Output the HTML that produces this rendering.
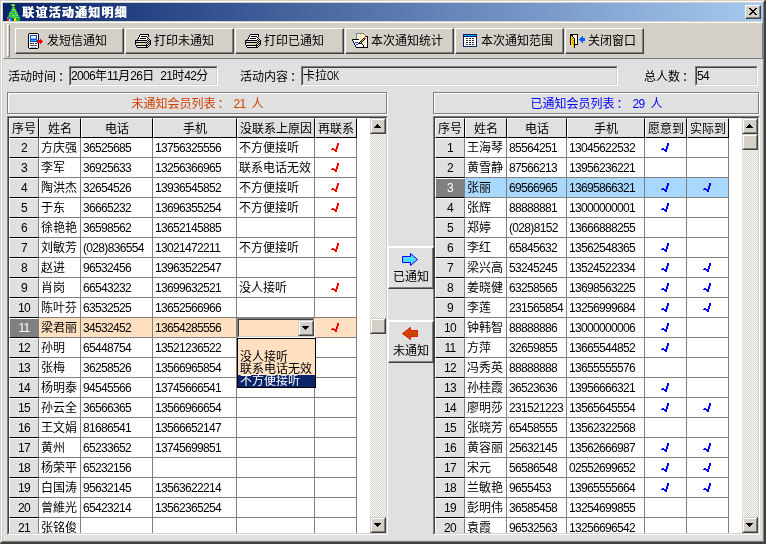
<!DOCTYPE html>
<html lang="zh-CN">
<head>
<meta charset="utf-8">
<title>联谊活动通知明细</title>
<style>
html,body{margin:0;padding:0}
body{width:766px;height:544px;overflow:hidden;position:relative;background:#e0e0e0;color:#000;
 font-family:"Liberation Sans","Noto Sans CJK SC",sans-serif;font-size:12px;line-height:12px}
div,span,svg{box-sizing:border-box}
#root{position:absolute;left:0;top:0;width:766px;height:544px;will-change:transform}
.a{position:absolute}
svg{display:block;shape-rendering:crispEdges}
.n{letter-spacing:-0.67px}
/* window frame */
#frame{left:0;top:0;width:766px;height:544px;
 border-style:solid;border-color:#d4d0c8 #404040 #404040 #d4d0c8;border-width:1px 2px 2px 1px}
#frame2{left:1px;top:1px;width:763px;height:541px;
 border-style:solid;border-color:#fff #808080 #808080 #fff;border-width:1px}
#frame3{left:2px;top:2px;width:761px;height:539px;border:1px solid #d4d0c8}
#title{left:3px;top:3px;width:760px;height:18px;background:linear-gradient(to right,#0a246a 0%,#a6caf0 100%)}
#title .t{left:19px;top:4px;color:#fff;font-weight:bold;letter-spacing:1.2px;white-space:nowrap;text-shadow:0.6px 0 0 #fff}
#close{left:742px;top:2px;width:16px;height:14px;background:#d4d0c8;
 border-style:solid;border-width:1px;border-color:#fff #404040 #404040 #fff}
#close:before{content:"";position:absolute;left:0;top:0;width:13px;height:11px;border-style:solid;border-width:0 1px 1px 0;border-color:#808080}
#tbgap{left:3px;top:21px;width:760px;height:1px;background:#d4d0c8}
#toolbar{left:3px;top:22px;width:760px;height:37px;background:#d4d0c8;
 border-style:solid;border-width:1px;border-color:#fff #808080 #808080 #fff}
#grip{left:7px;top:24px;width:3px;height:33px;background:#d4d0c8;border-style:solid;border-width:1px;border-color:#fff #808080 #808080 #fff}
.tb{top:28px;height:26px;background:#d4d0c8;border-style:solid;border-width:1px;border-color:#fff #404040 #404040 #fff}
.tb:before{content:"";position:absolute;left:0;top:0;right:0;bottom:0;border-style:solid;border-width:0 1px 1px 0;border-color:#808080}
.tb .x{position:absolute;top:6px;white-space:nowrap}
.tb svg{position:absolute}
/* labels & edits */
.lb{white-space:nowrap}
.ed{height:20px;top:66px;border-style:solid;border-width:1px;border-color:#808080 #fff #fff #808080;background:#e0e0e0}
.ed:before{content:"";position:absolute;left:0;top:0;right:0;bottom:0;border-style:solid;border-width:1px;border-color:#404040 #d4d0c8 #d4d0c8 #404040}
.ed span.v{position:absolute;left:1px;top:3px;white-space:nowrap}
/* groove panels */
.pn{top:92px;height:23px}
.pn:before{content:"";position:absolute;left:1px;top:1px;right:0;bottom:0;border:1px solid #fff}
.pn:after{content:"";position:absolute;left:0;top:0;right:1px;bottom:1px;border:1px solid #808080}
.pn .x{position:absolute;left:0;right:0;top:6px;text-align:center;white-space:nowrap}
.sp{display:inline-block;width:6px}
.co{position:relative;left:2px}
/* grids */
.grid{top:116px;height:419px;background:#fff;border-style:solid;border-width:1px;border-color:#808080 #fff #fff #808080}
.grid:before{content:"";position:absolute;left:0;top:0;right:0;bottom:0;border-style:solid;border-width:1px;border-color:#404040 #d4d0c8 #d4d0c8 #404040;z-index:5;pointer-events:none}
.gi{position:absolute;left:1px;top:1px;right:1px;bottom:1px;overflow:hidden}
.hc{position:absolute;top:0;height:20px;background:#e0e0e0;border-style:solid;border-width:1px;border-color:#fff #000 #000 #fff;
 text-align:center;padding-top:4px;white-space:nowrap;overflow:hidden}
.fc{position:absolute;left:0;height:20px;background:#e0e0e0;border-style:solid;border-width:1px;border-color:#fff #808080 #000 #fff;
 text-align:center;padding-top:3px;white-space:nowrap;overflow:hidden}
.fc.sel{background:#808080;color:#fff;border-color:#fff #808080 #000 #fff}
.dc{position:absolute;height:20px;border-style:solid;border-width:0 1px 1px 0;border-color:#808080;padding:4px 0 0 2px;white-space:nowrap;overflow:hidden}
.dc.c{padding:5px 0 0 16px}
.sb{position:absolute;top:0;width:16px;height:415px;background:repeating-conic-gradient(#fff 0% 25%,#d4d0c8 0% 50%) 0 0/2px 2px}
.btn{position:absolute;left:0;width:16px;height:16px;background:#d4d0c8;border-style:solid;border-width:1px;border-color:#d4d0c8 #404040 #404040 #d4d0c8}
.btn:before{content:"";position:absolute;left:0;top:0;right:0;bottom:0;border-style:solid;border-width:1px;border-color:#fff #808080 #808080 #fff}
.btn svg{position:absolute;left:3px;top:5px}
/* middle buttons */
.mb{left:388px;width:46px;height:43px;background:#e0e0e0;border-style:solid;border-width:2px 1px 1px 1px;border-color:#fff #404040 #404040 #fff;z-index:8}
.mb:before{content:"";position:absolute;left:0;top:0;right:0;bottom:0;border-style:solid;border-width:0 1px 1px 0;border-color:#808080}
.mb .x{position:absolute;left:4px;top:23px;white-space:nowrap}
.mb svg{position:absolute;left:13px;top:5px}
/* combo */
#combo{left:228px;top:200px;width:78px;height:20px;background:#ffe0c0;border-style:solid;border-width:1px;border-color:#808080 #fff #fff #808080;z-index:6}
#combo:before{content:"";position:absolute;left:0;top:0;right:0;bottom:0;border-style:solid;border-width:1px;border-color:#404040 #d4d0c8 #d4d0c8 #404040}
#combo .btn{left:60px;top:1px;width:16px;height:16px}
#drop{left:228px;top:220px;width:79px;height:50px;background:#ffe0c0;border:1px solid #000;z-index:7}
#drop div{height:12px;padding-left:2px;white-space:nowrap}
#drop div.s{background:#0a246a;color:#fff}
</style>
</head>
<body>
<div id="root">
<div class="a" id="frame"></div><div class="a" id="frame2"></div><div class="a" id="frame3"></div>
<div class="a" id="title">
 <svg class="a" style="left:3px;top:1px" width="15" height="17" viewBox="0 0 15 17">
  <path fill="#30d040" d="M5 0h4v2h-4zM7 2h1v2h-1zM6 3h3v2h-3zM5 5h5v2h-5zM4 7h7v2h-7zM3 9h9v2h-9zM2 11h11v2h-11zM1 13h13v1h-13z"/>
  <path fill="#ffd020" d="M6 1h3v1h-3zM7 5h1v1h-1zM8 6h1v1h-1zM9 8h1v1h-1zM3 9h1v1h-1zM7 11h1v1h-1zM10 11h1v1h-1zM8 14h2v3h-2z"/>
  <path fill="#1070ff" d="M5 6h1v1h-1zM7 8h2v1h-2zM5 10h1v1h-1zM11 12h1v1h-1zM3 13h3v4h-3z"/>
  <path fill="#40c0ff" d="M6 10h1v1h-1zM11 11h1v1h-1z"/>
  <path fill="#d03000" d="M2 11h1v2h-1zM1 14h2v3h-2z"/>
  <path fill="#f0f0f0" d="M3 15h1v2h-1z"/>
  <path fill="#106020" d="M6 14h2v3h-2z"/>
  <path fill="#20b030" d="M10 14h4v3h-4z"/>
 </svg>
 <span class="a t">联谊活动通知明细</span>
 <div class="a" id="close"><svg class="a" style="left:3px;top:2px" width="8" height="7" viewBox="0 0 8 7"><path fill="#000" d="M0 0h2v1h-2zM6 0h2v1h-2zM1 1h2v1h-2zM5 1h2v1h-2zM2 2h4v1h-4zM3 3h2v1h-2zM2 4h4v1h-4zM1 5h2v1h-2zM5 5h2v1h-2zM0 6h2v1h-2zM6 6h2v1h-2z"/></svg></div>
</div>
<div class="a" id="tbgap"></div>
<div class="a" id="toolbar"></div>
<div class="a" id="grip"></div>

<div class="a tb" style="left:15px;width:109px">
 <svg style="left:12px;top:4px" width="16" height="16" viewBox="0 0 16 16">
  <path fill="#000" d="M1 0h9v1h-9zM0 1h1v14h-1zM10 1h1v14h-1zM1 15h9v1h-9z"/>
  <path fill="#fff" d="M1 1h9v14h-9z"/>
  <path fill="#0050f0" d="M2 2h7v7h-7z"/>
  <path fill="#f8f0e8" d="M3 3h5v2h-5z"/>
  <path fill="#a0b8f0" d="M3 5h5v1h-5z"/>
  <path fill="#20c0ff" d="M3 7h5v1h-5z"/>
  <path fill="#0000e0" d="M5 8h1v1h-1z"/>
  <path fill="#303030" d="M2 10h2v1h-2zM5 10h1v1h-1zM7 10h2v1h-2z"/>
  <path fill="#3060d0" d="M4 10h1v1h-1z"/>
  <path fill="#606060" d="M2 12h7v1h-7z"/>
  <path fill="#80a8f0" d="M3 14h2v1h-2zM6 14h2v1h-2z"/>
  <path fill="#f00000" d="M9 7h3v3h-3zM12 6h1v5h-1zM13 7h1v3h-1zM14 8h1v1h-1z"/>
 </svg>
 <span class="x" style="left:31px">发短信通知</span>
</div>
<div class="a tb" style="left:125px;width:109px">
 <svg style="left:9px;top:5px" width="16" height="14" viewBox="0 0 16 14">
  <path fill="#fff" d="M5 1h8v1h-8zM5 2h8v1h-8zM4 3h8v1h-8zM4 4h8v1h-8zM3 5h9v1h-9zM2 12h10v1h-10z"/>
  <path fill="#d8d8d8" d="M1 7h11v1h-11zM1 9h11v1h-11zM1 10h11v1h-11z"/>
  <path fill="#ffc000" d="M7 10h3v1h-3z"/>
  <path fill="#000" d="M5 0h9v1h-9zM4 1h1v1h-1zM13 1h1v1h-1zM4 2h1v1h-1zM6 2h6v1h-6zM13 2h1v1h-1zM3 3h1v1h-1zM12 3h1v1h-1zM3 4h1v1h-1zM5 4h6v1h-6zM2 5h1v1h-1zM0 6h12v1h-12zM0 7h1v1h-1zM0 8h12v1h-12zM0 9h1v1h-1zM0 10h1v1h-1zM1 11h11v1h-11zM1 12h1v1h-1zM2 13h11v1h-11zM13 4h1v1h-1zM12 5h1v1h-1zM11 6h1v1h-1zM13 6h1v1h-1zM12 7h1v1h-1zM14 7h1v1h-1zM11 8h1v1h-1zM13 8h1v1h-1zM12 9h1v1h-1zM14 9h1v1h-1zM11 10h1v1h-1zM13 10h1v1h-1zM12 11h1v1h-1zM14 11h1v1h-1zM11 12h1v1h-1zM13 12h1v1h-1zM15 6h1v5h-1zM14 5h1v1h-1zM14 11h1v1h-1zM13 12h1v1h-1z"/>
 </svg>
 <span class="x" style="left:28px">打印未通知</span>
</div>
<div class="a tb" style="left:235px;width:109px">
 <svg style="left:9px;top:5px" width="16" height="14" viewBox="0 0 16 14">
  <path fill="#fff" d="M5 1h8v1h-8zM5 2h8v1h-8zM4 3h8v1h-8zM4 4h8v1h-8zM3 5h9v1h-9zM2 12h10v1h-10z"/>
  <path fill="#d8d8d8" d="M1 7h11v1h-11zM1 9h11v1h-11zM1 10h11v1h-11z"/>
  <path fill="#ffc000" d="M7 10h3v1h-3z"/>
  <path fill="#000" d="M5 0h9v1h-9zM4 1h1v1h-1zM13 1h1v1h-1zM4 2h1v1h-1zM6 2h6v1h-6zM13 2h1v1h-1zM3 3h1v1h-1zM12 3h1v1h-1zM3 4h1v1h-1zM5 4h6v1h-6zM2 5h1v1h-1zM0 6h12v1h-12zM0 7h1v1h-1zM0 8h12v1h-12zM0 9h1v1h-1zM0 10h1v1h-1zM1 11h11v1h-11zM1 12h1v1h-1zM2 13h11v1h-11zM13 4h1v1h-1zM12 5h1v1h-1zM11 6h1v1h-1zM13 6h1v1h-1zM12 7h1v1h-1zM14 7h1v1h-1zM11 8h1v1h-1zM13 8h1v1h-1zM12 9h1v1h-1zM14 9h1v1h-1zM11 10h1v1h-1zM13 10h1v1h-1zM12 11h1v1h-1zM14 11h1v1h-1zM11 12h1v1h-1zM13 12h1v1h-1zM15 6h1v5h-1zM14 5h1v1h-1zM14 11h1v1h-1zM13 12h1v1h-1z"/>
 </svg>
 <span class="x" style="left:28px">打印已通知</span>
</div>
<div class="a tb" style="left:345px;width:109px">
 <svg style="left:6px;top:4px" width="16" height="15" viewBox="0 0 16 15">
  <path fill="#fff" d="M5 1h7l3 3v10h-10z"/>
  <path fill="#808080" d="M4 0h8v1h-8zM4 1h1v6h-1zM12 1h1v1h-1zM13 2h1v1h-1z"/>
  <path fill="#000" d="M14 3h2v1h-2zM15 4h1v11h-1zM12 14h4v1h-4z"/>
  <path fill="#ffc820" d="M6 2h1v1h-1zM8 1h1v1h-1zM10 2h1v1h-1zM6 4h1v1h-1zM8 3h1v1h-1zM8 5h1v1h-1zM12 9h1v1h-1zM12 11h1v1h-1zM10 10h1v1h-1z"/>
  <path fill="#fff" d="M1 7h7l4 7h-8z"/>
  <path fill="#000" d="M0 6h7v1h-7zM0 7h1v1h-1zM1 8h1v2h-1zM2 10h1v2h-1zM3 12h1v2h-1zM4 14h8v1h-8zM9 10h1v1h-1zM10 11h1v1h-1zM11 12h1v2h-1z"/>
  <path fill="#0020ff" d="M3 9h3v1h-3zM4 11h2v1h-2z"/>
  <path fill="#000" d="M6 10h2v1h-2zM7 9h1v1h-1zM8 8h1v1h-1zM9 7h1v1h-1zM10 6h1v1h-1zM11 5h1v1h-1zM8 10h1v1h-1zM9 9h1v1h-1zM10 8h1v1h-1zM11 7h1v1h-1zM12 6h1v1h-1z"/>
  <path fill="#ffd000" d="M8 9h1v1h-1zM9 8h1v1h-1zM10 7h1v1h-1zM11 6h1v1h-1z"/>
  <path fill="#f02020" d="M12 4h1v2h-1zM13 5h1v1h-1zM13 3h1v1h-1z"/>
 </svg>
 <span class="x" style="left:25px">本次通知统计</span>
</div>
<div class="a tb" style="left:455px;width:109px">
 <svg style="left:7px;top:5px" width="14" height="13" viewBox="0 0 14 13">
  <path fill="#0a246a" d="M0 0h14v13h-14z"/>
  <path fill="#00a0ff" d="M1 1h12v1h-12z"/>
  <path fill="#fff" d="M1 3h12v9h-12z"/>
  <path fill="#303030" d="M3 4h2v1h-2zM6 4h2v1h-2zM9 4h2v1h-2zM3 6h2v1h-2zM6 6h2v1h-2zM9 6h2v1h-2zM3 8h2v1h-2zM6 8h2v1h-2zM9 8h2v1h-2zM3 10h2v1h-2zM6 10h2v1h-2zM9 10h2v1h-2z"/>
 </svg>
 <span class="x" style="left:25px">本次通知范围</span>
</div>
<div class="a tb" style="left:565px;width:79px">
 <svg style="left:4px;top:5px" width="16" height="14" viewBox="0 0 16 14">
  <path fill="#000" d="M0 0h8v11h-8z"/>
  <path fill="#fff" d="M3 1h4v9h-4z"/>
  <path fill="#000" d="M1 1l4 3v10l-4 -3z"/>
  <path fill="#ffd800" d="M1 2l3 2.500v8.500l-3 -2.500z"/>
  <path fill="#f06000" d="M2 4h1v1h-1zM3 6h1v1h-1zM2 8h1v1h-1zM3 10h1v1h-1z"/>
  <path fill="#0060ff" d="M9 5h1v1h-1zM10 4h1v3h-1zM11 3h1v5h-1zM12 2h1v7h-1zM13 4h2v3h-2z"/>
 </svg>
 <span class="x" style="left:22px">关闭窗口</span>
</div>

<span class="a lb" style="left:8px;top:71px">活动时间<span class="co">：</span></span>
<div class="a ed" style="left:69px;width:149px"><span class="v"><span class="n">2006</span>年<span class="n">11</span>月<span class="n">26</span>日<span class="sp"></span><span class="n">21</span>时<span class="n">42</span>分</span></div>
<span class="a lb" style="left:240px;top:71px">活动内容<span class="co">：</span></span>
<div class="a ed" style="left:301px;width:317px"><span class="v">卡拉<span style="display:inline-block;width:12px;transform:scaleX(.7);transform-origin:0 50%;white-space:nowrap">OK</span></span></div>
<span class="a lb" style="left:644px;top:71px">总人数<span class="co">：</span></span>
<div class="a ed" style="left:695px;width:63px"><span class="v"><span class="n">54</span></span></div>

<div class="a pn" style="left:7px;width:381px"><span class="x" style="color:#d04000">未通知会员列表<span class="co">：</span><span class="sp"></span><span class="n">21</span><span class="sp"></span>人</span></div>
<div class="a pn" style="left:433px;width:327px"><span class="x" style="color:#0000ff">已通知会员列表<span class="co">：</span><span class="sp"></span><span class="n">29</span><span class="sp"></span>人</span></div>

<div class="a grid" style="left:7px;width:381px"><div class="gi">
<div class="hc" style="left:0px;width:30px">序号</div>
<div class="hc" style="left:30px;width:42px">姓名</div>
<div class="hc" style="left:72px;width:72px">电话</div>
<div class="hc" style="left:144px;width:84px">手机</div>
<div class="hc" style="left:228px;width:78px">没联系上原因</div>
<div class="hc" style="left:306px;width:42px">再联系</div>
<div class="fc" style="top:20px;width:30px"><span class="n">2</span></div>
<div class="dc" style="top:20px;left:30px;width:42px">方庆强</div>
<div class="dc" style="top:20px;left:72px;width:72px"><span class="n">36525685</span></div>
<div class="dc" style="top:20px;left:144px;width:84px"><span class="n">13756325556</span></div>
<div class="dc" style="top:20px;left:228px;width:78px">不方便接听</div>
<div class="dc c" style="top:20px;left:306px;width:42px"><svg class="ck" width="8" height="9" viewBox="0 0 8 9"><path fill="#f00" d="M6 0h2v3h-2zM5 3h2v3h-2zM4 6h2v3h-2zM1 5h2v1h-2zM0 6h4v1h-4zM3 7h1v1h-1z"/></svg></div>
<div class="fc" style="top:40px;width:30px"><span class="n">3</span></div>
<div class="dc" style="top:40px;left:30px;width:42px">李军</div>
<div class="dc" style="top:40px;left:72px;width:72px"><span class="n">36925633</span></div>
<div class="dc" style="top:40px;left:144px;width:84px"><span class="n">13256366965</span></div>
<div class="dc" style="top:40px;left:228px;width:78px">联系电话无效</div>
<div class="dc c" style="top:40px;left:306px;width:42px"><svg class="ck" width="8" height="9" viewBox="0 0 8 9"><path fill="#f00" d="M6 0h2v3h-2zM5 3h2v3h-2zM4 6h2v3h-2zM1 5h2v1h-2zM0 6h4v1h-4zM3 7h1v1h-1z"/></svg></div>
<div class="fc" style="top:60px;width:30px"><span class="n">4</span></div>
<div class="dc" style="top:60px;left:30px;width:42px">陶洪杰</div>
<div class="dc" style="top:60px;left:72px;width:72px"><span class="n">32654526</span></div>
<div class="dc" style="top:60px;left:144px;width:84px"><span class="n">13936545852</span></div>
<div class="dc" style="top:60px;left:228px;width:78px">不方便接听</div>
<div class="dc c" style="top:60px;left:306px;width:42px"><svg class="ck" width="8" height="9" viewBox="0 0 8 9"><path fill="#f00" d="M6 0h2v3h-2zM5 3h2v3h-2zM4 6h2v3h-2zM1 5h2v1h-2zM0 6h4v1h-4zM3 7h1v1h-1z"/></svg></div>
<div class="fc" style="top:80px;width:30px"><span class="n">5</span></div>
<div class="dc" style="top:80px;left:30px;width:42px">于东</div>
<div class="dc" style="top:80px;left:72px;width:72px"><span class="n">36665232</span></div>
<div class="dc" style="top:80px;left:144px;width:84px"><span class="n">13696355254</span></div>
<div class="dc" style="top:80px;left:228px;width:78px">不方便接听</div>
<div class="dc c" style="top:80px;left:306px;width:42px"><svg class="ck" width="8" height="9" viewBox="0 0 8 9"><path fill="#f00" d="M6 0h2v3h-2zM5 3h2v3h-2zM4 6h2v3h-2zM1 5h2v1h-2zM0 6h4v1h-4zM3 7h1v1h-1z"/></svg></div>
<div class="fc" style="top:100px;width:30px"><span class="n">6</span></div>
<div class="dc" style="top:100px;left:30px;width:42px">徐艳艳</div>
<div class="dc" style="top:100px;left:72px;width:72px"><span class="n">36598562</span></div>
<div class="dc" style="top:100px;left:144px;width:84px"><span class="n">13652145885</span></div>
<div class="dc" style="top:100px;left:228px;width:78px"></div>
<div class="dc c" style="top:100px;left:306px;width:42px"></div>
<div class="fc" style="top:120px;width:30px"><span class="n">7</span></div>
<div class="dc" style="top:120px;left:30px;width:42px">刘敏芳</div>
<div class="dc" style="top:120px;left:72px;width:72px"><span class="n">(028)836554</span></div>
<div class="dc" style="top:120px;left:144px;width:84px"><span class="n">13021472211</span></div>
<div class="dc" style="top:120px;left:228px;width:78px">不方便接听</div>
<div class="dc c" style="top:120px;left:306px;width:42px"><svg class="ck" width="8" height="9" viewBox="0 0 8 9"><path fill="#f00" d="M6 0h2v3h-2zM5 3h2v3h-2zM4 6h2v3h-2zM1 5h2v1h-2zM0 6h4v1h-4zM3 7h1v1h-1z"/></svg></div>
<div class="fc" style="top:140px;width:30px"><span class="n">8</span></div>
<div class="dc" style="top:140px;left:30px;width:42px">赵进</div>
<div class="dc" style="top:140px;left:72px;width:72px"><span class="n">96532456</span></div>
<div class="dc" style="top:140px;left:144px;width:84px"><span class="n">13963522547</span></div>
<div class="dc" style="top:140px;left:228px;width:78px"></div>
<div class="dc c" style="top:140px;left:306px;width:42px"></div>
<div class="fc" style="top:160px;width:30px"><span class="n">9</span></div>
<div class="dc" style="top:160px;left:30px;width:42px">肖岗</div>
<div class="dc" style="top:160px;left:72px;width:72px"><span class="n">66543232</span></div>
<div class="dc" style="top:160px;left:144px;width:84px"><span class="n">13699632521</span></div>
<div class="dc" style="top:160px;left:228px;width:78px">没人接听</div>
<div class="dc c" style="top:160px;left:306px;width:42px"><svg class="ck" width="8" height="9" viewBox="0 0 8 9"><path fill="#f00" d="M6 0h2v3h-2zM5 3h2v3h-2zM4 6h2v3h-2zM1 5h2v1h-2zM0 6h4v1h-4zM3 7h1v1h-1z"/></svg></div>
<div class="fc" style="top:180px;width:30px"><span class="n">10</span></div>
<div class="dc" style="top:180px;left:30px;width:42px">陈叶芬</div>
<div class="dc" style="top:180px;left:72px;width:72px"><span class="n">63532525</span></div>
<div class="dc" style="top:180px;left:144px;width:84px"><span class="n">13652566966</span></div>
<div class="dc" style="top:180px;left:228px;width:78px"></div>
<div class="dc c" style="top:180px;left:306px;width:42px"></div>
<div class="fc sel" style="top:200px;width:30px"><span class="n">11</span></div>
<div class="dc" style="top:200px;left:30px;width:42px;background:#ffe0c0">梁君丽</div>
<div class="dc" style="top:200px;left:72px;width:72px;background:#ffe0c0"><span class="n">34532452</span></div>
<div class="dc" style="top:200px;left:144px;width:84px;background:#ffe0c0"><span class="n">13654285556</span></div>
<div class="dc" style="top:200px;left:228px;width:78px;background:#ffe0c0"></div>
<div class="dc c" style="top:200px;left:306px;width:42px;background:#ffe0c0"><svg class="ck" width="8" height="9" viewBox="0 0 8 9"><path fill="#f00" d="M6 0h2v3h-2zM5 3h2v3h-2zM4 6h2v3h-2zM1 5h2v1h-2zM0 6h4v1h-4zM3 7h1v1h-1z"/></svg></div>
<div class="fc" style="top:220px;width:30px"><span class="n">12</span></div>
<div class="dc" style="top:220px;left:30px;width:42px">孙明</div>
<div class="dc" style="top:220px;left:72px;width:72px"><span class="n">65448754</span></div>
<div class="dc" style="top:220px;left:144px;width:84px"><span class="n">13521236522</span></div>
<div class="dc" style="top:220px;left:228px;width:78px"></div>
<div class="dc c" style="top:220px;left:306px;width:42px"></div>
<div class="fc" style="top:240px;width:30px"><span class="n">13</span></div>
<div class="dc" style="top:240px;left:30px;width:42px">张梅</div>
<div class="dc" style="top:240px;left:72px;width:72px"><span class="n">36258526</span></div>
<div class="dc" style="top:240px;left:144px;width:84px"><span class="n">13566965854</span></div>
<div class="dc" style="top:240px;left:228px;width:78px"></div>
<div class="dc c" style="top:240px;left:306px;width:42px"></div>
<div class="fc" style="top:260px;width:30px"><span class="n">14</span></div>
<div class="dc" style="top:260px;left:30px;width:42px">杨明泰</div>
<div class="dc" style="top:260px;left:72px;width:72px"><span class="n">94545566</span></div>
<div class="dc" style="top:260px;left:144px;width:84px"><span class="n">13745666541</span></div>
<div class="dc" style="top:260px;left:228px;width:78px"></div>
<div class="dc c" style="top:260px;left:306px;width:42px"></div>
<div class="fc" style="top:280px;width:30px"><span class="n">15</span></div>
<div class="dc" style="top:280px;left:30px;width:42px">孙云全</div>
<div class="dc" style="top:280px;left:72px;width:72px"><span class="n">36566365</span></div>
<div class="dc" style="top:280px;left:144px;width:84px"><span class="n">13566966654</span></div>
<div class="dc" style="top:280px;left:228px;width:78px"></div>
<div class="dc c" style="top:280px;left:306px;width:42px"></div>
<div class="fc" style="top:300px;width:30px"><span class="n">16</span></div>
<div class="dc" style="top:300px;left:30px;width:42px">王文娟</div>
<div class="dc" style="top:300px;left:72px;width:72px"><span class="n">81686541</span></div>
<div class="dc" style="top:300px;left:144px;width:84px"><span class="n">13566652147</span></div>
<div class="dc" style="top:300px;left:228px;width:78px"></div>
<div class="dc c" style="top:300px;left:306px;width:42px"></div>
<div class="fc" style="top:320px;width:30px"><span class="n">17</span></div>
<div class="dc" style="top:320px;left:30px;width:42px">黄州</div>
<div class="dc" style="top:320px;left:72px;width:72px"><span class="n">65233652</span></div>
<div class="dc" style="top:320px;left:144px;width:84px"><span class="n">13745699851</span></div>
<div class="dc" style="top:320px;left:228px;width:78px"></div>
<div class="dc c" style="top:320px;left:306px;width:42px"></div>
<div class="fc" style="top:340px;width:30px"><span class="n">18</span></div>
<div class="dc" style="top:340px;left:30px;width:42px">杨荣平</div>
<div class="dc" style="top:340px;left:72px;width:72px"><span class="n">65232156</span></div>
<div class="dc" style="top:340px;left:144px;width:84px"><span class="n"></span></div>
<div class="dc" style="top:340px;left:228px;width:78px"></div>
<div class="dc c" style="top:340px;left:306px;width:42px"></div>
<div class="fc" style="top:360px;width:30px"><span class="n">19</span></div>
<div class="dc" style="top:360px;left:30px;width:42px">白国涛</div>
<div class="dc" style="top:360px;left:72px;width:72px"><span class="n">95632145</span></div>
<div class="dc" style="top:360px;left:144px;width:84px"><span class="n">13563622214</span></div>
<div class="dc" style="top:360px;left:228px;width:78px"></div>
<div class="dc c" style="top:360px;left:306px;width:42px"></div>
<div class="fc" style="top:380px;width:30px"><span class="n">20</span></div>
<div class="dc" style="top:380px;left:30px;width:42px">曾維光</div>
<div class="dc" style="top:380px;left:72px;width:72px"><span class="n">65423214</span></div>
<div class="dc" style="top:380px;left:144px;width:84px"><span class="n">13562365254</span></div>
<div class="dc" style="top:380px;left:228px;width:78px"></div>
<div class="dc c" style="top:380px;left:306px;width:42px"></div>
<div class="fc" style="top:400px;width:30px"><span class="n">21</span></div>
<div class="dc" style="top:400px;left:30px;width:42px">张铭俊</div>
<div class="dc" style="top:400px;left:72px;width:72px"><span class="n"></span></div>
<div class="dc" style="top:400px;left:144px;width:84px"><span class="n"></span></div>
<div class="dc" style="top:400px;left:228px;width:78px"></div>
<div class="dc c" style="top:400px;left:306px;width:42px"></div>
<div class="a" id="combo"><div class="btn"><svg width="7" height="4" viewBox="0 0 7 4"><path d="M0 0h7l-3.500 4z" fill="#000"/></svg></div></div>
<div class="a" id="drop"><div></div><div>没人接听</div><div>联系电话无效</div><div class="s">不方便接听</div></div>
<div class="sb" style="left:361px">
 <div class="btn" style="top:0"><svg width="7" height="4" viewBox="0 0 7 4"><path d="M0 4h7l-3.500 -4z" fill="#000"/></svg></div>
 <div class="btn" style="top:200px"></div>
 <div class="btn" style="top:399px"><svg width="7" height="4" viewBox="0 0 7 4"><path d="M0 0h7l-3.500 4z" fill="#000"/></svg></div>
</div>
</div></div>

<div class="a grid" style="left:433px;width:327px"><div class="gi">
<div class="hc" style="left:0px;width:30px">序号</div>
<div class="hc" style="left:30px;width:42px">姓名</div>
<div class="hc" style="left:72px;width:60px">电话</div>
<div class="hc" style="left:132px;width:78px">手机</div>
<div class="hc" style="left:210px;width:42px">愿意到</div>
<div class="hc" style="left:252px;width:42px">实际到</div>
<div class="fc" style="top:20px;width:30px"><span class="n">1</span></div>
<div class="dc" style="top:20px;left:30px;width:42px">王海琴</div>
<div class="dc" style="top:20px;left:72px;width:60px"><span class="n">85564251</span></div>
<div class="dc" style="top:20px;left:132px;width:78px"><span class="n">13045622532</span></div>
<div class="dc c" style="top:20px;left:210px;width:42px"><svg class="ck" width="8" height="9" viewBox="0 0 8 9"><path fill="#00f" d="M6 0h2v3h-2zM5 3h2v3h-2zM4 6h2v3h-2zM1 5h2v1h-2zM0 6h4v1h-4zM3 7h1v1h-1z"/></svg></div>
<div class="dc c" style="top:20px;left:252px;width:42px"></div>
<div class="fc" style="top:40px;width:30px"><span class="n">2</span></div>
<div class="dc" style="top:40px;left:30px;width:42px">黄雪静</div>
<div class="dc" style="top:40px;left:72px;width:60px"><span class="n">87566213</span></div>
<div class="dc" style="top:40px;left:132px;width:78px"><span class="n">13956236221</span></div>
<div class="dc c" style="top:40px;left:210px;width:42px"></div>
<div class="dc c" style="top:40px;left:252px;width:42px"></div>
<div class="fc sel" style="top:60px;width:30px"><span class="n">3</span></div>
<div class="dc" style="top:60px;left:30px;width:42px;background:#a8d8ff">张丽</div>
<div class="dc" style="top:60px;left:72px;width:60px;background:#a8d8ff"><span class="n">69566965</span></div>
<div class="dc" style="top:60px;left:132px;width:78px;background:#a8d8ff"><span class="n">13695866321</span></div>
<div class="dc c" style="top:60px;left:210px;width:42px;background:#a8d8ff"><svg class="ck" width="8" height="9" viewBox="0 0 8 9"><path fill="#00f" d="M6 0h2v3h-2zM5 3h2v3h-2zM4 6h2v3h-2zM1 5h2v1h-2zM0 6h4v1h-4zM3 7h1v1h-1z"/></svg></div>
<div class="dc c" style="top:60px;left:252px;width:42px;background:#a8d8ff"><svg class="ck" width="8" height="9" viewBox="0 0 8 9"><path fill="#00f" d="M6 0h2v3h-2zM5 3h2v3h-2zM4 6h2v3h-2zM1 5h2v1h-2zM0 6h4v1h-4zM3 7h1v1h-1z"/></svg></div>
<div class="fc" style="top:80px;width:30px"><span class="n">4</span></div>
<div class="dc" style="top:80px;left:30px;width:42px">张辉</div>
<div class="dc" style="top:80px;left:72px;width:60px"><span class="n">88888881</span></div>
<div class="dc" style="top:80px;left:132px;width:78px"><span class="n">13000000001</span></div>
<div class="dc c" style="top:80px;left:210px;width:42px"><svg class="ck" width="8" height="9" viewBox="0 0 8 9"><path fill="#00f" d="M6 0h2v3h-2zM5 3h2v3h-2zM4 6h2v3h-2zM1 5h2v1h-2zM0 6h4v1h-4zM3 7h1v1h-1z"/></svg></div>
<div class="dc c" style="top:80px;left:252px;width:42px"></div>
<div class="fc" style="top:100px;width:30px"><span class="n">5</span></div>
<div class="dc" style="top:100px;left:30px;width:42px">郑婷</div>
<div class="dc" style="top:100px;left:72px;width:60px"><span class="n">(028)8152</span></div>
<div class="dc" style="top:100px;left:132px;width:78px"><span class="n">13666888255</span></div>
<div class="dc c" style="top:100px;left:210px;width:42px"></div>
<div class="dc c" style="top:100px;left:252px;width:42px"></div>
<div class="fc" style="top:120px;width:30px"><span class="n">6</span></div>
<div class="dc" style="top:120px;left:30px;width:42px">李红</div>
<div class="dc" style="top:120px;left:72px;width:60px"><span class="n">65845632</span></div>
<div class="dc" style="top:120px;left:132px;width:78px"><span class="n">13562548365</span></div>
<div class="dc c" style="top:120px;left:210px;width:42px"><svg class="ck" width="8" height="9" viewBox="0 0 8 9"><path fill="#00f" d="M6 0h2v3h-2zM5 3h2v3h-2zM4 6h2v3h-2zM1 5h2v1h-2zM0 6h4v1h-4zM3 7h1v1h-1z"/></svg></div>
<div class="dc c" style="top:120px;left:252px;width:42px"></div>
<div class="fc" style="top:140px;width:30px"><span class="n">7</span></div>
<div class="dc" style="top:140px;left:30px;width:42px">梁兴高</div>
<div class="dc" style="top:140px;left:72px;width:60px"><span class="n">53245245</span></div>
<div class="dc" style="top:140px;left:132px;width:78px"><span class="n">13524522334</span></div>
<div class="dc c" style="top:140px;left:210px;width:42px"><svg class="ck" width="8" height="9" viewBox="0 0 8 9"><path fill="#00f" d="M6 0h2v3h-2zM5 3h2v3h-2zM4 6h2v3h-2zM1 5h2v1h-2zM0 6h4v1h-4zM3 7h1v1h-1z"/></svg></div>
<div class="dc c" style="top:140px;left:252px;width:42px"><svg class="ck" width="8" height="9" viewBox="0 0 8 9"><path fill="#00f" d="M6 0h2v3h-2zM5 3h2v3h-2zM4 6h2v3h-2zM1 5h2v1h-2zM0 6h4v1h-4zM3 7h1v1h-1z"/></svg></div>
<div class="fc" style="top:160px;width:30px"><span class="n">8</span></div>
<div class="dc" style="top:160px;left:30px;width:42px">姜晓健</div>
<div class="dc" style="top:160px;left:72px;width:60px"><span class="n">63258565</span></div>
<div class="dc" style="top:160px;left:132px;width:78px"><span class="n">13698563225</span></div>
<div class="dc c" style="top:160px;left:210px;width:42px"><svg class="ck" width="8" height="9" viewBox="0 0 8 9"><path fill="#00f" d="M6 0h2v3h-2zM5 3h2v3h-2zM4 6h2v3h-2zM1 5h2v1h-2zM0 6h4v1h-4zM3 7h1v1h-1z"/></svg></div>
<div class="dc c" style="top:160px;left:252px;width:42px"><svg class="ck" width="8" height="9" viewBox="0 0 8 9"><path fill="#00f" d="M6 0h2v3h-2zM5 3h2v3h-2zM4 6h2v3h-2zM1 5h2v1h-2zM0 6h4v1h-4zM3 7h1v1h-1z"/></svg></div>
<div class="fc" style="top:180px;width:30px"><span class="n">9</span></div>
<div class="dc" style="top:180px;left:30px;width:42px">李莲</div>
<div class="dc" style="top:180px;left:72px;width:60px"><span class="n">231565854</span></div>
<div class="dc" style="top:180px;left:132px;width:78px"><span class="n">13256999684</span></div>
<div class="dc c" style="top:180px;left:210px;width:42px"><svg class="ck" width="8" height="9" viewBox="0 0 8 9"><path fill="#00f" d="M6 0h2v3h-2zM5 3h2v3h-2zM4 6h2v3h-2zM1 5h2v1h-2zM0 6h4v1h-4zM3 7h1v1h-1z"/></svg></div>
<div class="dc c" style="top:180px;left:252px;width:42px"><svg class="ck" width="8" height="9" viewBox="0 0 8 9"><path fill="#00f" d="M6 0h2v3h-2zM5 3h2v3h-2zM4 6h2v3h-2zM1 5h2v1h-2zM0 6h4v1h-4zM3 7h1v1h-1z"/></svg></div>
<div class="fc" style="top:200px;width:30px"><span class="n">10</span></div>
<div class="dc" style="top:200px;left:30px;width:42px">钟韩智</div>
<div class="dc" style="top:200px;left:72px;width:60px"><span class="n">88888886</span></div>
<div class="dc" style="top:200px;left:132px;width:78px"><span class="n">13000000006</span></div>
<div class="dc c" style="top:200px;left:210px;width:42px"><svg class="ck" width="8" height="9" viewBox="0 0 8 9"><path fill="#00f" d="M6 0h2v3h-2zM5 3h2v3h-2zM4 6h2v3h-2zM1 5h2v1h-2zM0 6h4v1h-4zM3 7h1v1h-1z"/></svg></div>
<div class="dc c" style="top:200px;left:252px;width:42px"></div>
<div class="fc" style="top:220px;width:30px"><span class="n">11</span></div>
<div class="dc" style="top:220px;left:30px;width:42px">方萍</div>
<div class="dc" style="top:220px;left:72px;width:60px"><span class="n">32659855</span></div>
<div class="dc" style="top:220px;left:132px;width:78px"><span class="n">13665544852</span></div>
<div class="dc c" style="top:220px;left:210px;width:42px"><svg class="ck" width="8" height="9" viewBox="0 0 8 9"><path fill="#00f" d="M6 0h2v3h-2zM5 3h2v3h-2zM4 6h2v3h-2zM1 5h2v1h-2zM0 6h4v1h-4zM3 7h1v1h-1z"/></svg></div>
<div class="dc c" style="top:220px;left:252px;width:42px"></div>
<div class="fc" style="top:240px;width:30px"><span class="n">12</span></div>
<div class="dc" style="top:240px;left:30px;width:42px">冯秀英</div>
<div class="dc" style="top:240px;left:72px;width:60px"><span class="n">88888888</span></div>
<div class="dc" style="top:240px;left:132px;width:78px"><span class="n">13655555576</span></div>
<div class="dc c" style="top:240px;left:210px;width:42px"></div>
<div class="dc c" style="top:240px;left:252px;width:42px"></div>
<div class="fc" style="top:260px;width:30px"><span class="n">13</span></div>
<div class="dc" style="top:260px;left:30px;width:42px">孙桂霞</div>
<div class="dc" style="top:260px;left:72px;width:60px"><span class="n">36523636</span></div>
<div class="dc" style="top:260px;left:132px;width:78px"><span class="n">13956666321</span></div>
<div class="dc c" style="top:260px;left:210px;width:42px"><svg class="ck" width="8" height="9" viewBox="0 0 8 9"><path fill="#00f" d="M6 0h2v3h-2zM5 3h2v3h-2zM4 6h2v3h-2zM1 5h2v1h-2zM0 6h4v1h-4zM3 7h1v1h-1z"/></svg></div>
<div class="dc c" style="top:260px;left:252px;width:42px"></div>
<div class="fc" style="top:280px;width:30px"><span class="n">14</span></div>
<div class="dc" style="top:280px;left:30px;width:42px">廖明莎</div>
<div class="dc" style="top:280px;left:72px;width:60px"><span class="n">231521223</span></div>
<div class="dc" style="top:280px;left:132px;width:78px"><span class="n">13565645554</span></div>
<div class="dc c" style="top:280px;left:210px;width:42px"><svg class="ck" width="8" height="9" viewBox="0 0 8 9"><path fill="#00f" d="M6 0h2v3h-2zM5 3h2v3h-2zM4 6h2v3h-2zM1 5h2v1h-2zM0 6h4v1h-4zM3 7h1v1h-1z"/></svg></div>
<div class="dc c" style="top:280px;left:252px;width:42px"><svg class="ck" width="8" height="9" viewBox="0 0 8 9"><path fill="#00f" d="M6 0h2v3h-2zM5 3h2v3h-2zM4 6h2v3h-2zM1 5h2v1h-2zM0 6h4v1h-4zM3 7h1v1h-1z"/></svg></div>
<div class="fc" style="top:300px;width:30px"><span class="n">15</span></div>
<div class="dc" style="top:300px;left:30px;width:42px">张晓芳</div>
<div class="dc" style="top:300px;left:72px;width:60px"><span class="n">65458555</span></div>
<div class="dc" style="top:300px;left:132px;width:78px"><span class="n">13562322568</span></div>
<div class="dc c" style="top:300px;left:210px;width:42px"></div>
<div class="dc c" style="top:300px;left:252px;width:42px"></div>
<div class="fc" style="top:320px;width:30px"><span class="n">16</span></div>
<div class="dc" style="top:320px;left:30px;width:42px">黄容丽</div>
<div class="dc" style="top:320px;left:72px;width:60px"><span class="n">25632145</span></div>
<div class="dc" style="top:320px;left:132px;width:78px"><span class="n">13562666987</span></div>
<div class="dc c" style="top:320px;left:210px;width:42px"><svg class="ck" width="8" height="9" viewBox="0 0 8 9"><path fill="#00f" d="M6 0h2v3h-2zM5 3h2v3h-2zM4 6h2v3h-2zM1 5h2v1h-2zM0 6h4v1h-4zM3 7h1v1h-1z"/></svg></div>
<div class="dc c" style="top:320px;left:252px;width:42px"><svg class="ck" width="8" height="9" viewBox="0 0 8 9"><path fill="#00f" d="M6 0h2v3h-2zM5 3h2v3h-2zM4 6h2v3h-2zM1 5h2v1h-2zM0 6h4v1h-4zM3 7h1v1h-1z"/></svg></div>
<div class="fc" style="top:340px;width:30px"><span class="n">17</span></div>
<div class="dc" style="top:340px;left:30px;width:42px">宋元</div>
<div class="dc" style="top:340px;left:72px;width:60px"><span class="n">56586548</span></div>
<div class="dc" style="top:340px;left:132px;width:78px"><span class="n">02552699652</span></div>
<div class="dc c" style="top:340px;left:210px;width:42px"><svg class="ck" width="8" height="9" viewBox="0 0 8 9"><path fill="#00f" d="M6 0h2v3h-2zM5 3h2v3h-2zM4 6h2v3h-2zM1 5h2v1h-2zM0 6h4v1h-4zM3 7h1v1h-1z"/></svg></div>
<div class="dc c" style="top:340px;left:252px;width:42px"><svg class="ck" width="8" height="9" viewBox="0 0 8 9"><path fill="#00f" d="M6 0h2v3h-2zM5 3h2v3h-2zM4 6h2v3h-2zM1 5h2v1h-2zM0 6h4v1h-4zM3 7h1v1h-1z"/></svg></div>
<div class="fc" style="top:360px;width:30px"><span class="n">18</span></div>
<div class="dc" style="top:360px;left:30px;width:42px">兰敏艳</div>
<div class="dc" style="top:360px;left:72px;width:60px"><span class="n">9655453</span></div>
<div class="dc" style="top:360px;left:132px;width:78px"><span class="n">13965555664</span></div>
<div class="dc c" style="top:360px;left:210px;width:42px"><svg class="ck" width="8" height="9" viewBox="0 0 8 9"><path fill="#00f" d="M6 0h2v3h-2zM5 3h2v3h-2zM4 6h2v3h-2zM1 5h2v1h-2zM0 6h4v1h-4zM3 7h1v1h-1z"/></svg></div>
<div class="dc c" style="top:360px;left:252px;width:42px"><svg class="ck" width="8" height="9" viewBox="0 0 8 9"><path fill="#00f" d="M6 0h2v3h-2zM5 3h2v3h-2zM4 6h2v3h-2zM1 5h2v1h-2zM0 6h4v1h-4zM3 7h1v1h-1z"/></svg></div>
<div class="fc" style="top:380px;width:30px"><span class="n">19</span></div>
<div class="dc" style="top:380px;left:30px;width:42px">彭明伟</div>
<div class="dc" style="top:380px;left:72px;width:60px"><span class="n">36585458</span></div>
<div class="dc" style="top:380px;left:132px;width:78px"><span class="n">13254699855</span></div>
<div class="dc c" style="top:380px;left:210px;width:42px"></div>
<div class="dc c" style="top:380px;left:252px;width:42px"></div>
<div class="fc" style="top:400px;width:30px"><span class="n">20</span></div>
<div class="dc" style="top:400px;left:30px;width:42px">袁霞</div>
<div class="dc" style="top:400px;left:72px;width:60px"><span class="n">96532563</span></div>
<div class="dc" style="top:400px;left:132px;width:78px"><span class="n">13256696542</span></div>
<div class="dc c" style="top:400px;left:210px;width:42px"></div>
<div class="dc c" style="top:400px;left:252px;width:42px"></div>
<div class="sb" style="left:307px">
 <div class="btn" style="top:0"><svg width="7" height="4" viewBox="0 0 7 4"><path d="M0 4h7l-3.500 -4z" fill="#000"/></svg></div>
 <div class="btn" style="top:16px"></div>
 <div class="btn" style="top:399px"><svg width="7" height="4" viewBox="0 0 7 4"><path d="M0 0h7l-3.500 4z" fill="#000"/></svg></div>
</div>
</div></div>

<div class="a mb" style="top:246px">
 <svg width="17" height="13" viewBox="0 0 17 13"><path d="M0.500 3.500h8v-3l7 6l-7 6v-3h-8z" fill="#50d8ff" stroke="#0000ff" stroke-width="1" shape-rendering="auto"/></svg>
 <span class="x">已通知</span>
</div>
<div class="a mb" style="top:320px">
 <svg width="17" height="13" viewBox="0 0 17 13"><path d="M15.500 3.500h-7v-3l-8 6l8 6v-3h7z" fill="#cc4400" stroke="#cc4400" stroke-width="1" shape-rendering="auto"/><path d="M15.500 3.500h-7v-3l-8 6l8 6v-3h7z" fill="none" stroke="#ff0000" stroke-width="1" stroke-dasharray="1 1" shape-rendering="auto"/></svg>
 <span class="x">未通知</span>
</div>
</div>
</body>
</html>
